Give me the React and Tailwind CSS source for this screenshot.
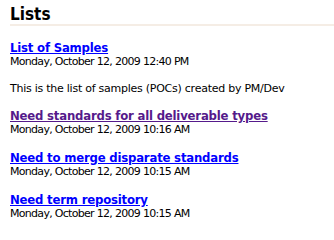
const items = [
  { title: "List of Samples", date: "Monday, October 12, 2009 12:40 PM", desc: "This is the list of samples (POCs) created by PM/Dev" },
  { title: "Need standards for all deliverable types", date: "Monday, October 12, 2009 10:16 AM", visited: true },
  { title: "Need to merge disparate standards", date: "Monday, October 12, 2009 10:15 AM" },
  { title: "Need term repository", date: "Monday, October 12, 2009 10:15 AM" },
];

export default function App() {
  return (
    <div className="w-[334px] h-[236px] bg-white pl-[10px] pt-[4px] font-['DejaVu_Sans',sans-serif] text-black">
      <h2 className="text-[17px] font-bold leading-[20px] font-['DejaVu_Sans_Condensed','DejaVu_Sans',sans-serif]">Lists</h2>
      <div className="h-[2px] bg-[#f5ede5]" />
      <div className="mt-[14px] flex flex-col gap-[13px]">
        {items.map((it) => (
          <div key={it.title}>
            <a
              href="#"
              className={`block text-[13px] font-bold leading-[15px] tracking-[-0.2px] underline font-['DejaVu_Sans_Condensed','DejaVu_Sans',sans-serif] ${it.visited ? "text-[#551a8b]" : "text-[#0000ff]"}`}
            >
              {it.title}
            </a>
            <div className="text-[11px] leading-[14px] tracking-[-0.7px]">{it.date}</div>
            {it.desc && <p className="text-[11px] leading-[14px] tracking-[-0.25px] mt-[13px] -mb-[1px]">{it.desc}</p>}
          </div>
        ))}
      </div>
    </div>
  );
}
